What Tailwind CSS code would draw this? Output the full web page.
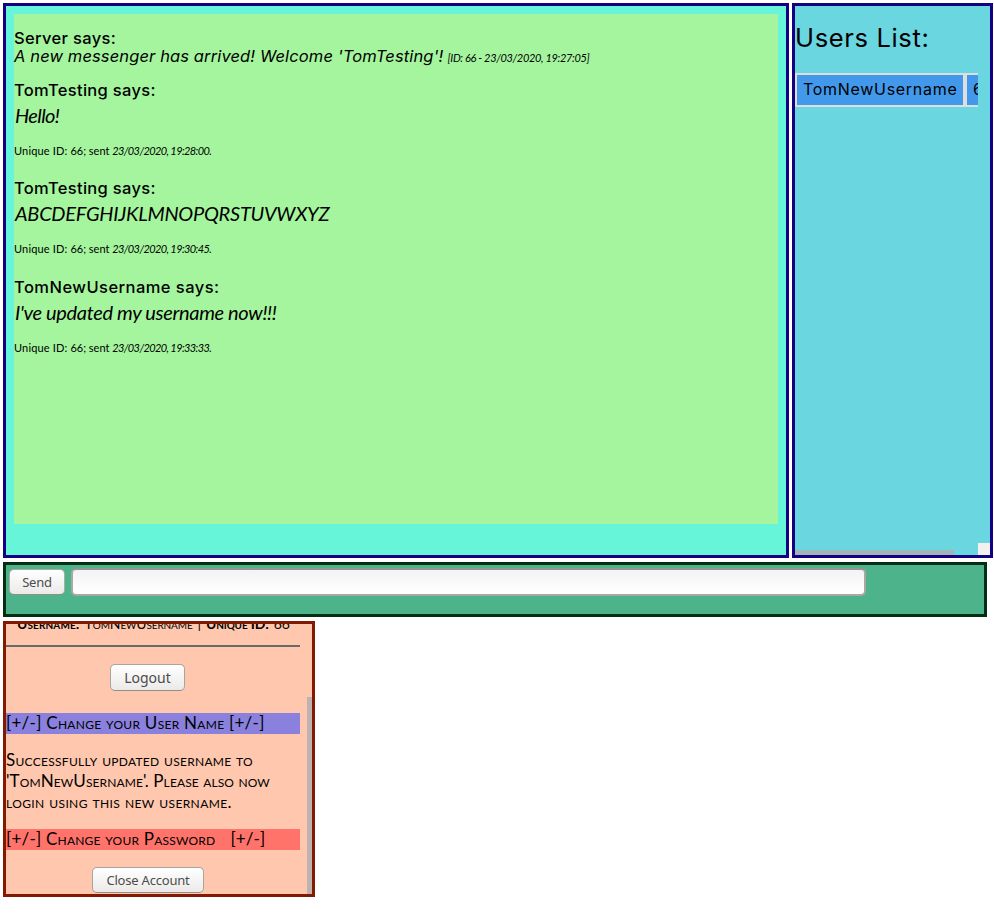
<!DOCTYPE html>
<html lang="en">
<head>
<meta charset="utf-8">
<title>Messenger</title>
<script src="https://cdn.jsdelivr.net/npm/@tailwindcss/browser@4"></script>
</head>
<body class="bg-white text-black font-[Inter,sans-serif] h-[919px] overflow-hidden p-[3px]">
<div class="flex gap-[3px] h-[555px]">
  <main class="w-[786px] shrink-0 border-[3px] border-[#140082] bg-[#66f5d9] p-2">
    <div class="h-[510px] bg-[#a5f59e] pt-[15px] whitespace-nowrap">
      <section class="h-[52px]">
        <h3 class="h-[18px] leading-[18px] text-[16.5px] font-medium tracking-[0.35px]">Server says:</h3>
        <p class="h-[19px] leading-[19px] italic"><span class="text-[16.5px] tracking-[0.12px]">A new messenger has arrived! Welcome 'TomTesting'!</span><span class="text-[11px] ml-[4px] tracking-[-0.33px] font-[Lato,sans-serif]">[ID: 66 - 23/03/2020, 19:27:05]</span></p>
      </section>
      <section class="h-[98px]">
        <h3 class="h-[18px] leading-[18px] text-[16.5px] font-medium tracking-[0.32px]">TomTesting says:</h3>
        <p class="h-[34px] leading-[32px] pl-[1px] text-[20px] italic tracking-[-0.6px] font-[Lato,sans-serif]">Hello!</p>
        <p class="h-[20px] leading-[20px] mt-[8px] text-[11px] font-[Lato,sans-serif]"><span class="tracking-[0.16px]">Unique ID: </span><span class="tracking-[0px]">66; sent </span><i class="tracking-[-0.6px]">23/03/2020, 19:28:00.</i></p>
      </section>
      <section class="h-[99px]">
        <h3 class="h-[18px] leading-[18px] text-[16.5px] font-medium tracking-[0.32px]">TomTesting says:</h3>
        <p class="h-[34px] leading-[32px] pl-[1px] text-[20px] italic tracking-[-0.26px] font-[Lato,sans-serif]">ABCDEFGHIJKLMNOPQRSTUVWXYZ</p>
        <p class="h-[20px] leading-[20px] mt-[8px] text-[11px] font-[Lato,sans-serif]"><span class="tracking-[0.16px]">Unique ID: </span><span class="tracking-[0px]">66; sent </span><i class="tracking-[-0.6px]">23/03/2020, 19:30:45.</i></p>
      </section>
      <section class="h-[98px]">
        <h3 class="h-[18px] leading-[18px] text-[16.5px] font-medium tracking-[0.45px]">TomNewUsername says:</h3>
        <p class="h-[34px] leading-[32px] pl-[1px] text-[20px] italic tracking-[-0.34px] font-[Lato,sans-serif]">I've updated my username now!!!</p>
        <p class="h-[20px] leading-[20px] mt-[8px] text-[11px] font-[Lato,sans-serif]"><span class="tracking-[0.16px]">Unique ID: </span><span class="tracking-[0px]">66; sent </span><i class="tracking-[-0.6px]">23/03/2020, 19:33:33.</i></p>
      </section>
    </div>
  </main>
  <aside class="w-[201px] shrink-0 border-[3px] border-[#140082] bg-[#6ad6e0] flex flex-col">
    <h2 class="mt-[16px] h-[32px] leading-[32px] text-[25.5px] tracking-[0.65px] whitespace-nowrap">Users List:</h2>
    <div class="mt-[19px] w-[183px] h-[34px] overflow-hidden flex bg-[#dedede] pt-[2px] pb-[2px] pl-[2px] gap-[4px] text-[16px] leading-[29px] whitespace-nowrap">
      <div class="w-[166px] shrink-0 bg-[#4299eb] pl-[6px] tracking-[0.7px]">TomNewUsername</div>
      <div class="w-[40px] shrink-0 bg-[#4299eb] pl-[6px]">66</div>
    </div>
    <div class="mt-auto flex items-end justify-between">
      <div class="w-[159px] h-[5px] bg-[#a1b5b8]"></div>
      <div class="w-[12px] h-[12px] bg-[#f2f1f0]"></div>
    </div>
  </aside>
</div>
<form class="mt-[4px] w-[984px] h-[55px] border-[3px] border-[#022e12] bg-[#4db38a] flex items-start pl-[3px] pt-[3px] gap-[6px]">
  <button type="button" class="mt-[1px] w-[56px] h-[26px] rounded-[5px] border border-[#b2aaa4] border-b-[#8e8e8a] bg-linear-to-b from-white to-[#ebeae9] text-[#4c4c4c] text-[13px] leading-[23px] tracking-[-0.2px] font-['Noto_Sans',sans-serif]">Send</button>
  <input class="w-[795px] h-[28px] rounded-[5px] border-2 border-[#aaa7a5] border-t-[#969693] bg-linear-to-b from-[#f3f3f3] to-white" aria-label="Message">
</form>
<section class="mt-[4px] w-[312px] h-[276px] border-[3px] border-[#821900] bg-[#ffc7ad] overflow-hidden flex justify-between font-[Lato,sans-serif] [font-variant:small-caps]">
  <div class="w-[294px] text-[17px] leading-[21px] whitespace-nowrap">
    <p class="-mt-[10px] h-[19px] leading-[19px] pl-[11px] text-[14px]"><b class="tracking-[0.12px]">Username:</b><span class="ml-[5px] tracking-[-0.12px]">TomNewUsername</span><span class="mx-[5px]">|</span><b class="tracking-[-0.15px]">Unique ID:</b><span class="ml-[5px]">66</span></p>
    <hr class="mt-[12px] border-0 border-t-2 border-[#666b6b]">
    <div class="mt-[17px] pr-[11px] flex justify-center"><button type="button" class="w-[75px] h-[27px] rounded-[5px] border border-[#aaa49f] border-b-[#8e8e8a] bg-linear-to-b from-white to-[#ebeae9] text-[#4c4c4c] text-[14px] leading-[24px] [font-variant:normal] font-['Noto_Sans',sans-serif]">Logout</button></div>
    <div class="mt-[22px] h-[21px] leading-[20px] bg-[#8a80de] tracking-[0.28px]">[+/-] Change your User Name [+/-]</div>
    <p class="mt-[15px] mb-[17px]"><span class="tracking-[0.28px]">Successfully updated username to</span><br><span class="tracking-[0.1px]">'TomNewUsername'. Please also now</span><br><span class="tracking-[0.38px]">login using this new username.</span></p>
    <div class="h-[21px] leading-[20px] bg-[#ff736b]"><span class="tracking-[0.22px]">[+/-] Change your Password</span><span class="ml-[15px] tracking-[0.14px]">[+/-]</span></div>
    <div class="mt-[17px] pr-[10px] flex justify-center"><button type="button" class="w-[112px] h-[26px] rounded-[5px] border border-[#aaa49f] border-b-[#8e8e8a] bg-linear-to-b from-white to-[#ebeae9] text-[#4c4c4c] text-[13px] leading-[23px] tracking-[-0.2px] [font-variant:normal] font-['Noto_Sans',sans-serif]">Close Account</button></div>
  </div>
  <div class="mt-[73px] w-[5px] bg-[#bdb2b0]"></div>
</section>
</body>
</html>
